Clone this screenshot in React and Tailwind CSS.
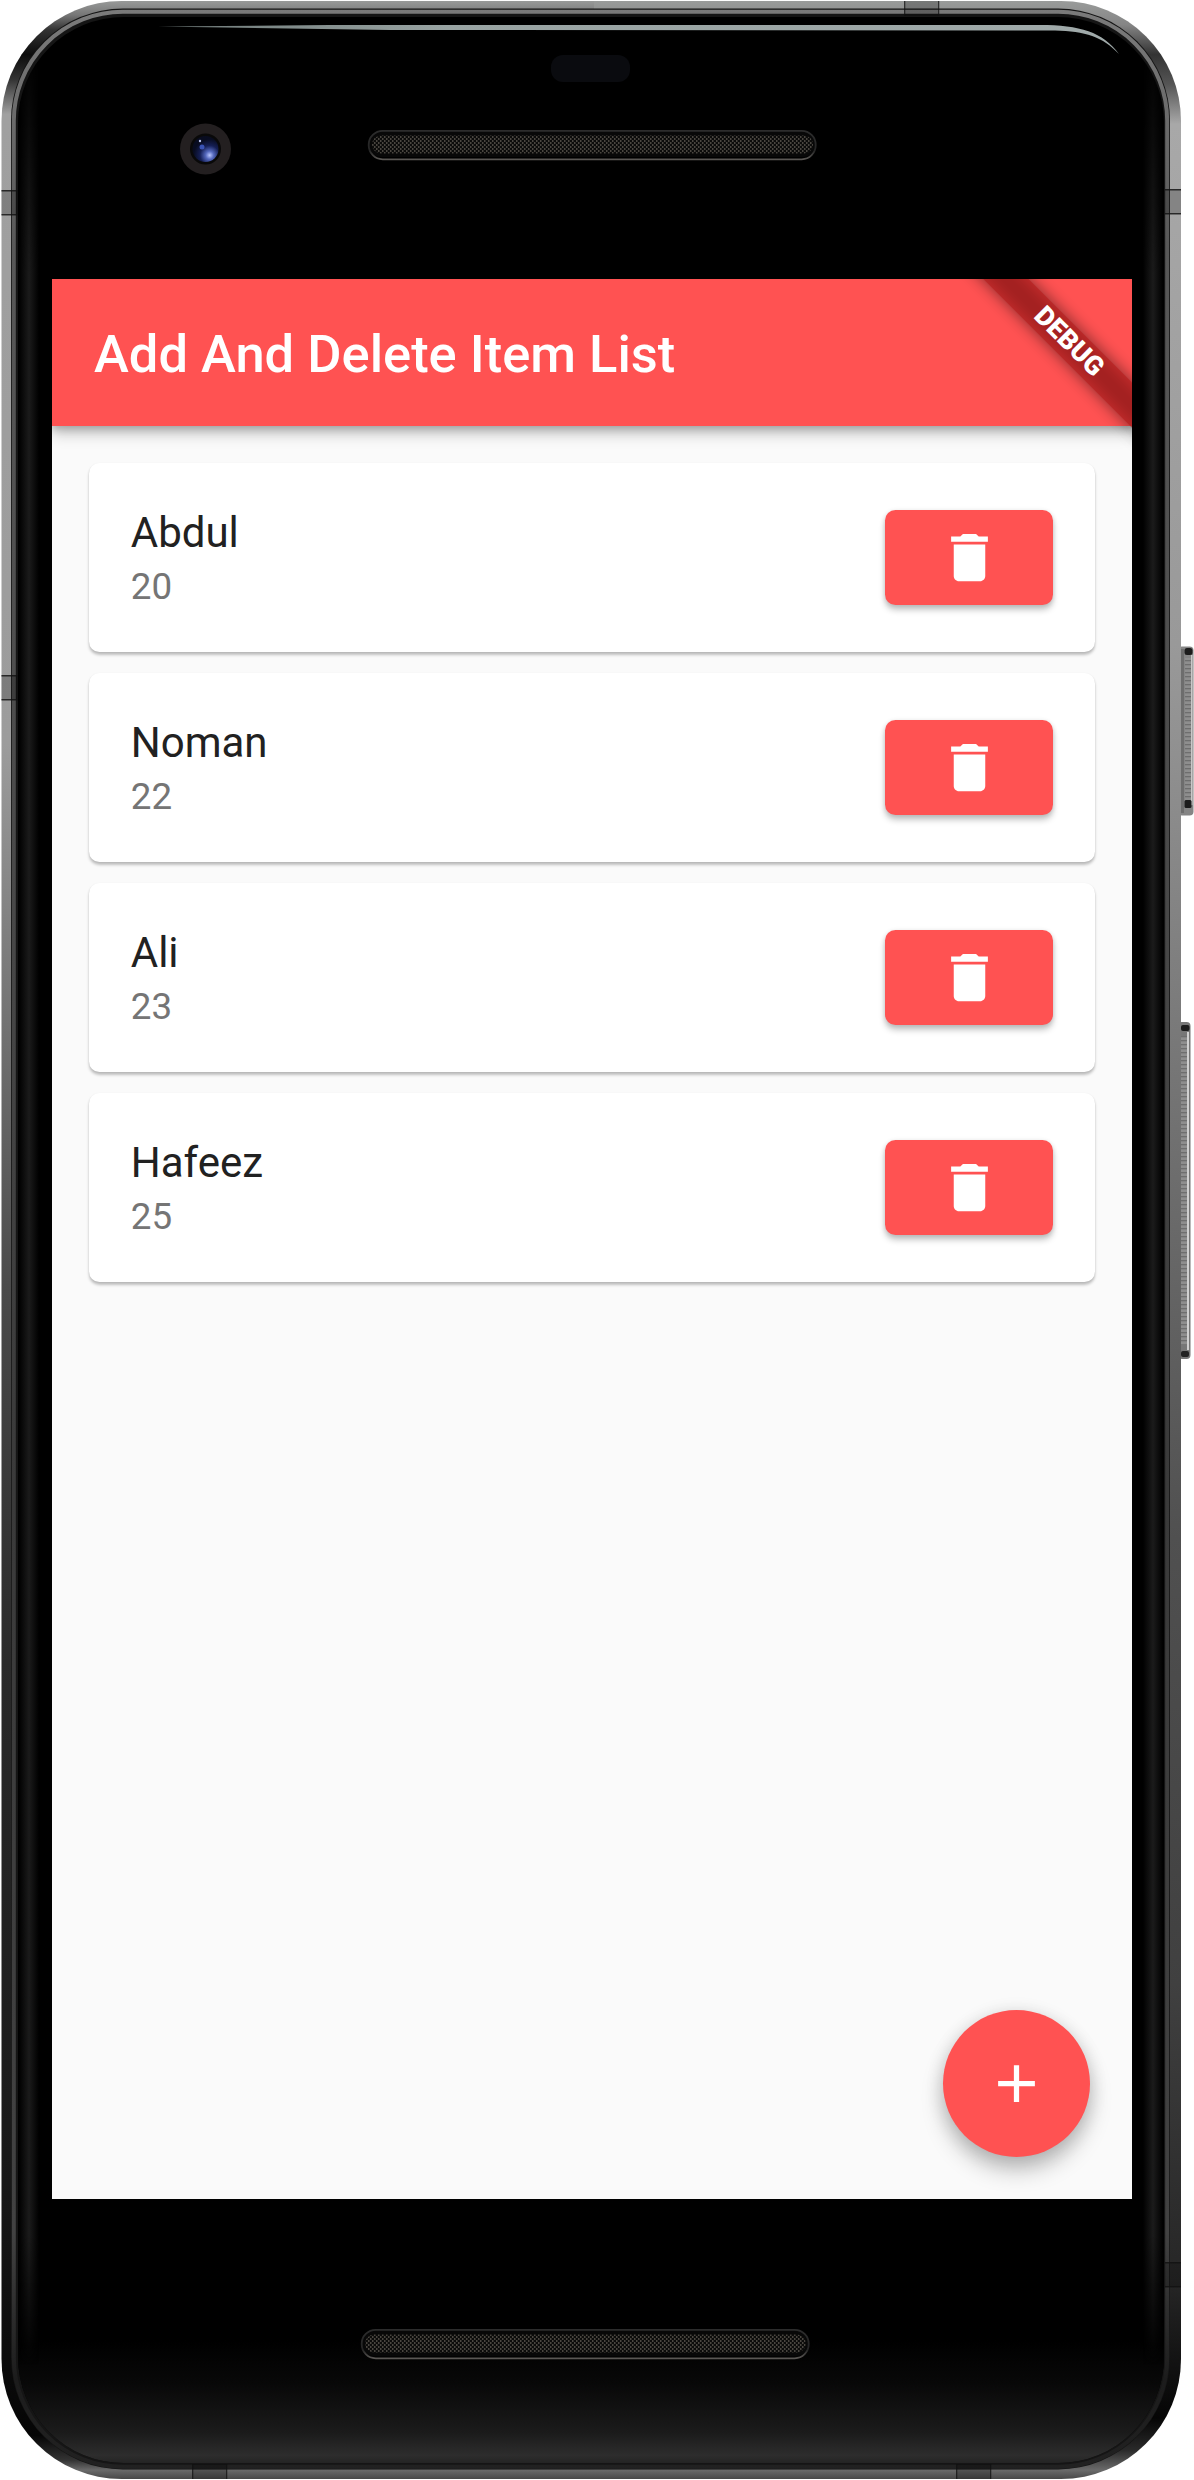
import React from "react";

const people = [
  { name: "Abdul", age: 20 },
  { name: "Noman", age: 22 },
  { name: "Ali", age: 23 },
  { name: "Hafeez", age: 25 },
];

function Speaker({ x, y }) {
  return (
    <g>
      <rect x={x} y={y} width="447.5" height="26" rx="13" fill="#080808" />
      <rect x={x + 0.7} y={y - 0.2} width="447" height="28.5" rx="14" fill="none" stroke="url(#rim)" strokeWidth="1.8" />
      <rect x={x + 4} y={y + 4.5} width="441" height="18" rx="9" fill="url(#mesh)" />
    </g>
  );
}

function SideSeam({ x, y }) {
  return (
    <g>
      <rect x={x} y={y} width="16" height="25" fill="#000" opacity="0.2" />
      <rect x={x} y={y} width="16" height="1.5" fill="#111" opacity="0.8" />
      <rect x={x} y={y + 24} width="16" height="1.5" fill="#111" opacity="0.8" />
    </g>
  );
}

function EdgeSeam({ x, y }) {
  return (
    <g>
      <rect x={x} y={y} width="35" height="15" fill="#000" opacity="0.22" />
      <rect x={x} y={y} width="1.3" height="15" fill="#111" opacity="0.7" />
      <rect x={x + 34} y={y} width="1.3" height="15" fill="#111" opacity="0.7" />
    </g>
  );
}

function SideKeys() {
  return (
    <g>
      <rect x="1178" y="646.5" width="15.5" height="169" rx="4" fill="#858585" />
      <rect x="1181" y="649" width="3" height="164" fill="#6d6d6d" />
      <rect x="1185" y="657" width="6" height="146" fill="url(#brushed)" />
      <rect x="1191" y="655" width="1.5" height="150" fill="#c9c9c9" />
      <rect x="1184.5" y="648" width="8" height="7" rx="2.5" fill="#1c1c1c" />
      <rect x="1184.5" y="800" width="7" height="8" rx="1.5" fill="#1c1c1c" />
      <rect x="1178" y="1022" width="12.5" height="337" rx="4" fill="#777" />
      <rect x="1181" y="1036" width="6" height="308" fill="url(#brushed)" />
      <rect x="1187" y="1032" width="2" height="318" fill="#d0d0d0" />
      <rect x="1181" y="1025" width="8.5" height="6" rx="2" fill="#1c1c1c" />
      <rect x="1181" y="1351" width="8" height="6" rx="2" fill="#222" />
    </g>
  );
}

function PhoneBody() {
  return (
    <svg className="absolute inset-0" width="1194" height="2480" viewBox="0 0 1194 2480" aria-hidden="true">
      <defs>
        <linearGradient id="metalLeft" x1="0" y1="0" x2="0" y2="2480" gradientUnits="userSpaceOnUse">
          <stop offset="0" stopColor="#9a9c9b" />
          <stop offset="0.006" stopColor="#777" />
          <stop offset="0.012" stopColor="#333" />
          <stop offset="0.022" stopColor="#0c0c0c" />
          <stop offset="0.032" stopColor="#333" />
          <stop offset="0.046" stopColor="#a0a0a0" />
          <stop offset="0.3" stopColor="#9c9c9c" />
          <stop offset="0.4" stopColor="#777" />
          <stop offset="0.52" stopColor="#4a4a4a" />
          <stop offset="0.67" stopColor="#2a2a2a" />
          <stop offset="0.88" stopColor="#181818" />
          <stop offset="0.982" stopColor="#050505" />
          <stop offset="0.992" stopColor="#333" />
          <stop offset="0.996" stopColor="#6a6a6a" />
          <stop offset="1" stopColor="#444" />
        </linearGradient>
        <linearGradient id="metalRight" x1="0" y1="0" x2="0" y2="2480" gradientUnits="userSpaceOnUse">
          <stop offset="0" stopColor="#9a9c9b" />
          <stop offset="0.01" stopColor="#858585" />
          <stop offset="0.022" stopColor="#333" />
          <stop offset="0.034" stopColor="#555" />
          <stop offset="0.05" stopColor="#a8a8a8" />
          <stop offset="0.26" stopColor="#999" />
          <stop offset="0.45" stopColor="#727272" />
          <stop offset="0.62" stopColor="#505050" />
          <stop offset="0.8" stopColor="#404040" />
          <stop offset="0.92" stopColor="#262626" />
          <stop offset="0.975" stopColor="#050505" />
          <stop offset="0.988" stopColor="#2a2a2a" />
          <stop offset="0.996" stopColor="#6a6a6a" />
          <stop offset="1" stopColor="#444" />
        </linearGradient>
        <linearGradient id="inner" x1="0" y1="0" x2="0" y2="2480" gradientUnits="userSpaceOnUse">
          <stop offset="0" stopColor="#7c7c7c" />
          <stop offset="0.1" stopColor="#585858" />
          <stop offset="0.6" stopColor="#3a3a3a" />
          <stop offset="0.9" stopColor="#424242" />
          <stop offset="0.96" stopColor="#1c1c1c" />
          <stop offset="1" stopColor="#222" />
        </linearGradient>
        <linearGradient id="sideGlow">
          <stop offset="0" stopColor="#000" />
          <stop offset="0.5" stopColor="#1b1b1b" />
          <stop offset="1" stopColor="#000" />
        </linearGradient>
        <linearGradient id="fade" x1="0" y1="40" x2="0" y2="2400" gradientUnits="userSpaceOnUse">
          <stop offset="0" stopColor="#000" />
          <stop offset="0.1" stopColor="#fff" />
          <stop offset="0.93" stopColor="#fff" />
          <stop offset="0.985" stopColor="#000" />
        </linearGradient>
        <mask id="fadeEnds" maskUnits="userSpaceOnUse" x="0" y="0" width="1194" height="2480">
          <rect width="1194" height="2480" fill="url(#fade)" />
        </mask>
        <linearGradient id="chin" x1="0" y1="0" x2="0" y2="1">
          <stop offset="0" stopColor="#000" />
          <stop offset="0.35" stopColor="#080808" />
          <stop offset="0.75" stopColor="#1b1b1b" />
          <stop offset="0.93" stopColor="#2d2d2d" />
          <stop offset="1" stopColor="#232323" />
        </linearGradient>
        <linearGradient id="shine">
          <stop offset="0" stopColor="#6d7877" />
          <stop offset="0.3" stopColor="#98a3a2" />
          <stop offset="1" stopColor="#a0aaaa" />
        </linearGradient>
        <linearGradient id="rim" x1="0" y1="0" x2="0" y2="1">
          <stop offset="0" stopColor="#2c2c2c" />
          <stop offset="0.7" stopColor="#252525" />
          <stop offset="1" stopColor="#5a5754" />
        </linearGradient>
        <pattern id="brushed" width="6" height="4" patternUnits="userSpaceOnUse">
          <rect width="6" height="4" fill="#8e8e8e" />
          <rect width="6" height="1.3" fill="#6e6e6e" />
        </pattern>
        <pattern id="mesh" width="4" height="4" patternUnits="userSpaceOnUse">
          <rect width="4" height="4" fill="#0c0c0b" />
          <rect width="1.5" height="2" fill="#4a4640" />
          <rect x="2" y="2" width="1.5" height="2" fill="#4a4640" />
        </pattern>
        <radialGradient id="lens" cx="0.66" cy="0.74" r="0.62">
          <stop offset="0" stopColor="#b9c6ff" />
          <stop offset="0.25" stopColor="#5468bd" />
          <stop offset="0.6" stopColor="#151f55" />
          <stop offset="1" stopColor="#080c20" />
        </radialGradient>
        <clipPath id="leftHalf">
          <rect width="594" height="2480" />
        </clipPath>
        <clipPath id="rightHalf">
          <rect x="594" width="600" height="2480" />
        </clipPath>
        <clipPath id="glass">
          <rect x="18" y="17" width="1146" height="2446" rx="106" />
        </clipPath>
      </defs>

      <SideKeys />

      <rect x="1.5" y="1" width="1179.5" height="2478" rx="120" fill="url(#metalLeft)" clipPath="url(#leftHalf)" />
      <rect x="1.5" y="1" width="1179.5" height="2478" rx="120" fill="url(#metalRight)" clipPath="url(#rightHalf)" />
      <rect x="11" y="8.5" width="1159" height="2461" rx="112" fill="#151515" />
      <rect x="13.8" y="11.8" width="1153.4" height="2455" rx="109" fill="none" stroke="url(#inner)" strokeWidth="4" />
      <rect x="18" y="17" width="1146" height="2446" rx="106" fill="#000" />

      <g clipPath="url(#glass)">
        <rect x="18" y="2340" width="1146" height="124" fill="url(#chin)" />
        <g mask="url(#fadeEnds)">
          <rect x="19" y="40" width="20" height="2360" fill="url(#sideGlow)" />
          <rect x="1143" y="40" width="20" height="2360" fill="url(#sideGlow)" />
        </g>
      </g>

      <path d="M158 26.5 L330 25 H1040 C1080 25 1103 32 1119 54 C1103 37 1085 31 1055 30.5 L390 30 Z" fill="url(#shine)" />

      <SideSeam x={1.5} y={190} />
      <SideSeam x={1.5} y={675} />
      <SideSeam x={1165} y={189} />
      <SideSeam x={1165} y={2262} />
      <EdgeSeam x={904} y={1} />
      <EdgeSeam x={192} y={2464} />
      <EdgeSeam x={956} y={2464} />

      <rect x="551" y="55" width="79" height="27" rx="12" fill="#0a0b0f" />
      <circle cx="205.5" cy="149" r="25.5" fill="#231f20" />
      <circle cx="205.5" cy="149" r="15.5" fill="#090909" />
      <circle cx="205.5" cy="149" r="13" fill="url(#lens)" />
      <circle cx="202" cy="147" r="2.5" fill="#4562d0" opacity="0.8" />
      <circle cx="200" cy="141" r="1.2" fill="#b8c2ee" />
      <Speaker x={368} y={131} />
      <Speaker x={361} y={2330} />
    </svg>
  );
}

function DebugBanner() {
  return (
    <div className="pointer-events-none absolute right-0 top-0 h-[220px] w-[220px] overflow-hidden">
      <div className="absolute left-[17px] top-[47px] h-[31.5px] w-[280px] rotate-45 bg-black/50 blur-[8px]" />
      <div className="absolute left-[17px] top-[47px] flex h-[31.5px] w-[280px] rotate-45 items-center justify-center bg-[#b71c1c]/63 text-[26.8px] font-black leading-none text-white">
        DEBUG
      </div>
    </div>
  );
}

function PersonCard({ name, age }) {
  return (
    <li className="flex h-[188.5px] items-center justify-between rounded-[10.5px] bg-white px-[42px] shadow-[0_2.5px_3px_rgba(0,0,0,0.23),0_1px_2px_rgba(0,0,0,0.06)]">
      <div className="flex flex-col pt-[6px]">
        <span className="text-[42px] leading-[54px] text-[#212121]">{name}</span>
        <span className="text-[36.75px] leading-[54px] text-[#757575]">{age}</span>
      </div>
      <button
        aria-label={`Delete ${name}`}
        className="flex h-[94.5px] w-[168px] items-center justify-center rounded-[10.5px] bg-[#ff5252] shadow-[0_5px_6px_rgba(0,0,0,0.22),0_1px_5px_rgba(0,0,0,0.12)]"
      >
        <svg className="h-[63px] w-[63px]" viewBox="0 0 24 24" fill="#fff">
          <path d="M6 19c0 1.1.9 2 2 2h8c1.1 0 2-.9 2-2V7H6v12zM19 4h-3.5l-1-1h-5l-1 1H5v2h14V4z" />
        </svg>
      </button>
    </li>
  );
}

export default function App() {
  return (
    <div className="relative h-[2480px] w-[1194px] overflow-hidden bg-white pl-[52px] pt-[279px] font-['Roboto',sans-serif]">
      <PhoneBody />
      <main className="relative flex h-[1920px] w-[1080px] flex-col overflow-hidden bg-[#fafafa]">
        <header className="flex h-[147px] shrink-0 items-center bg-[#ff5252] px-[42px] pt-[3px] shadow-[0_8px_14px_rgba(0,0,0,0.2),0_3px_8px_rgba(0,0,0,0.22)]">
          <h1 className="text-[52.5px] font-medium leading-none text-white">Add And Delete Item List</h1>
        </header>
        <ul className="flex flex-col gap-[21.5px] px-[36.75px] pt-[37px]">
          {people.map((person) => (
            <PersonCard key={person.name} name={person.name} age={person.age} />
          ))}
        </ul>
        <button
          aria-label="Add item"
          className="absolute bottom-[42px] right-[42px] flex h-[147px] w-[147px] items-center justify-center rounded-full bg-[#ff5252] shadow-[0_14px_22px_rgba(0,0,0,0.22),0_3px_18px_rgba(0,0,0,0.14)]"
        >
          <svg className="h-[63px] w-[63px]" viewBox="0 0 24 24" fill="#fff">
            <path d="M19 13h-6v6h-2v-6H5v-2h6V5h2v6h6v2z" />
          </svg>
        </button>
        <DebugBanner />
      </main>
    </div>
  );
}
